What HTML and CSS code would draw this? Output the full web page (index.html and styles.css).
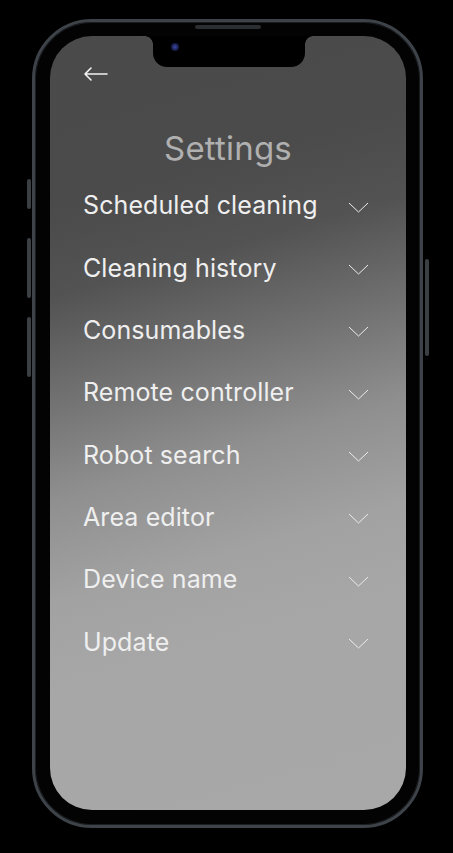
FILE: index.html
```html
<!DOCTYPE html>
<html>
<head>
<meta charset="utf-8">
<link rel="stylesheet" href="styles.css">
</head>
<body>
<div class="stage">
  <div class="phone">
    <span class="btn btn-l1"></span>
    <span class="btn btn-l2"></span>
    <span class="btn btn-l3"></span>
    <span class="btn btn-r1"></span>
    <span class="speaker"></span>
    <div class="bezel">
      <div class="screen">
        <div class="notch"><span class="cam"></span></div>
        <div class="topbar">
          <svg class="back" width="26" height="14" viewBox="0 0 26 14"><path d="M24 7H2M8 1L2 7l6 6" fill="none" stroke="#f2f2f2" stroke-width="1.6" stroke-linecap="round" stroke-linejoin="round"/></svg>
        </div>
        <h1 class="title">Settings</h1>
        <ul class="list">
          <li class="row"><span>Scheduled cleaning</span><svg class="chev" width="21" height="11" viewBox="0 0 21 11"><path d="M1 1l9.5 9L20 1" fill="none" stroke="#ececec" stroke-width="1"/></svg></li>
          <li class="row"><span>Cleaning history</span><svg class="chev" width="21" height="11" viewBox="0 0 21 11"><path d="M1 1l9.5 9L20 1" fill="none" stroke="#ececec" stroke-width="1"/></svg></li>
          <li class="row"><span>Consumables</span><svg class="chev" width="21" height="11" viewBox="0 0 21 11"><path d="M1 1l9.5 9L20 1" fill="none" stroke="#ececec" stroke-width="1"/></svg></li>
          <li class="row"><span>Remote controller</span><svg class="chev" width="21" height="11" viewBox="0 0 21 11"><path d="M1 1l9.5 9L20 1" fill="none" stroke="#ececec" stroke-width="1"/></svg></li>
          <li class="row"><span>Robot search</span><svg class="chev" width="21" height="11" viewBox="0 0 21 11"><path d="M1 1l9.5 9L20 1" fill="none" stroke="#ececec" stroke-width="1"/></svg></li>
          <li class="row"><span>Area editor</span><svg class="chev" width="21" height="11" viewBox="0 0 21 11"><path d="M1 1l9.5 9L20 1" fill="none" stroke="#ececec" stroke-width="1"/></svg></li>
          <li class="row"><span>Device name</span><svg class="chev" width="21" height="11" viewBox="0 0 21 11"><path d="M1 1l9.5 9L20 1" fill="none" stroke="#ececec" stroke-width="1"/></svg></li>
          <li class="row"><span>Update</span><svg class="chev" width="21" height="11" viewBox="0 0 21 11"><path d="M1 1l9.5 9L20 1" fill="none" stroke="#ececec" stroke-width="1"/></svg></li>
        </ul>
      </div>
    </div>
  </div>
</div>
</body>
</html>
```

FILE: styles.css
```css
* { box-sizing: border-box; }
html, body { margin: 0; padding: 0; background: #000; }
body { width: 453px; height: 853px; overflow: hidden; font-family: Inter, "Liberation Sans", sans-serif; }
.stage { padding: 19px 0 0 32px; }
.phone {
  position: relative;
  width: 391px;
  height: 809px;
  border-radius: 60px;
  border: 3px solid #3d4348;
  background: #030303;
  box-shadow: inset 0 0 0 1px #1b1e21;
}
.btn { position: absolute; width: 4px; background: #3a3f44; border-radius: 2px; }
.btn-l1 { left: -8px; top: 157px; height: 30px; }
.btn-l2 { left: -8px; top: 216px; height: 60px; }
.btn-l3 { left: -8px; top: 295px; height: 60px; }
.btn-r1 { right: -9px; top: 237px; height: 97px; }
.speaker {
  position: absolute; left: 160px; top: 3px; width: 66px; height: 4px;
  border-radius: 2px; background: #2a2e31;
}
.bezel { padding: 14px 14px 15px 15px; height: 100%; }
.screen {
  position: relative;
  height: 100%;
  border-radius: 42px;
  overflow: hidden;
  background: linear-gradient(164deg, #4a4a4a 0%, #4b4b4b 20%, #535353 30%, #727272 42%, #8f8f8f 53%, #a2a2a2 65%, #a7a7a7 75%, #a8a8a8 100%);
  padding: 0 0 0 33px;
}
.notch {
  position: absolute; left: 103px; top: 0; width: 152px; height: 31px;
  background: #000; border-radius: 0 0 14px 14px;
}
.notch::before, .notch::after {
  content: ""; position: absolute; top: 0; width: 8px; height: 8px;
}
.notch::before { left: -8px; background: radial-gradient(circle at 0 100%, transparent 7.5px, #000 8px); }
.notch::after { right: -8px; background: radial-gradient(circle at 100% 100%, transparent 7.5px, #000 8px); }
.cam {
  position: absolute; left: 18px; top: 7px; width: 8px; height: 8px; border-radius: 50%;
  background: radial-gradient(circle, #3b4aa8 0%, #1a2150 55%, #05060c 100%);
}
.topbar { height: 92px; padding-top: 31px; }
.back { display: block; }
.title {
  margin: 0 0 0 -33px;
  text-align: center;
  font-weight: 400;
  font-size: 33px;
  line-height: 40px;
  color: #b0b0b0;
  letter-spacing: 0.2px;
  height: 40px;
}
.list { list-style: none; margin: 0; padding: 0 37px 0 0; }
.row {
  display: flex; align-items: center; justify-content: space-between;
  height: 62.35px;
  font-size: 25px;
  color: #efefef;
  letter-spacing: 0.1px;
}
.row:first-child { margin-top: 6px; }
.chev { display: block; margin-top: 4px; }
```
